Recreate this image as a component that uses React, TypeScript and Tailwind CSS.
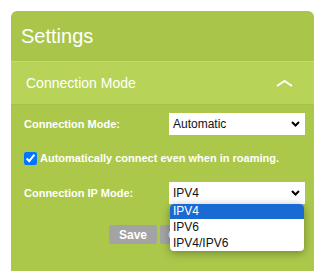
import React from 'react';

const font = { fontFamily: '"Liberation Sans", Arial, sans-serif' };

const Chevron: React.FC = () => (
  <svg width="9" height="6" viewBox="0 0 9 6" className="shrink-0">
    <path d="M1 1 L4.5 4.5 L8 1" fill="none" stroke="#000" strokeWidth="2" />
  </svg>
);

const FakeSelect: React.FC<{ value: string }> = ({ value }) => (
  <div className="flex items-center justify-between w-[136px] h-[22px] bg-white pl-[4px] pr-[5px] text-[12px] font-normal text-[#111]">
    <span>{value}</span>
    <Chevron />
  </div>
);

const App: React.FC = () => {
  return (
    <div className="relative w-[325px] h-[271px] overflow-hidden bg-white pt-[11px] px-[11px]" style={font}>
      <div className="rounded-t-[6px] overflow-hidden h-[280px] flex flex-col">
        <div className="h-[50px] bg-[#a9c64b] flex items-center px-[10px] text-[20px] text-white">Settings</div>
        <div className="h-[43px] border-t border-[#bfdb6c] bg-[#b7d458] flex items-center justify-between pl-[15px] pr-[21px] text-[14px] text-white">
          <span>Connection Mode</span>
          <svg width="17" height="7" viewBox="0 0 17 7">
            <path d="M1 6 L8.5 1 L16 6" fill="none" stroke="#fff" strokeWidth="2" />
          </svg>
        </div>
        <div className="flex-1 border-t border-[#a6c245] bg-[#abc84b] pt-[8px] pl-[13px] text-white text-[11px] font-bold">
          <div className="flex items-center h-[22px]">
            <span className="w-[145px]">Connection Mode:</span>
            <FakeSelect value="Automatic" />
          </div>
          <div className="flex items-center h-[19px] mt-[14px]">
            <input type="checkbox" checked readOnly className="w-[13px] h-[13px] m-0 mr-[3px]" />
            <span>Automatically connect even when in roaming.</span>
          </div>
          <div className="flex items-center h-[22px] mt-[14px]">
            <span className="w-[145px]">Connection IP Mode:</span>
            <FakeSelect value="IPV4" />
          </div>
          <div className="flex justify-center gap-[3px] mt-[21px] pr-[13px]">
            <button className="w-[48px] h-[19px] rounded-[2px] bg-[#a3a3a3] text-white text-[12px] font-bold">Save</button>
            <button className="w-[56px] h-[19px] rounded-[2px] bg-[#a3a3a3] text-white text-[12px] font-bold">Cancel</button>
          </div>
        </div>
      </div>
      <div className="absolute left-[170px] top-[204px] w-[134px] bg-white rounded-[4px] shadow-[0_2px_8px_rgba(0,0,0,0.35)] text-[12px] text-[#111] overflow-hidden">
        <div className="h-[15px] leading-[15px] px-[3px] bg-[#1a6ad4] text-white">IPV4</div>
        <div className="h-[16px] leading-[16px] px-[3px]">IPV6</div>
        <div className="h-[16px] leading-[16px] px-[3px]">IPV4/IPV6</div>
      </div>
    </div>
  );
};

export default App;
